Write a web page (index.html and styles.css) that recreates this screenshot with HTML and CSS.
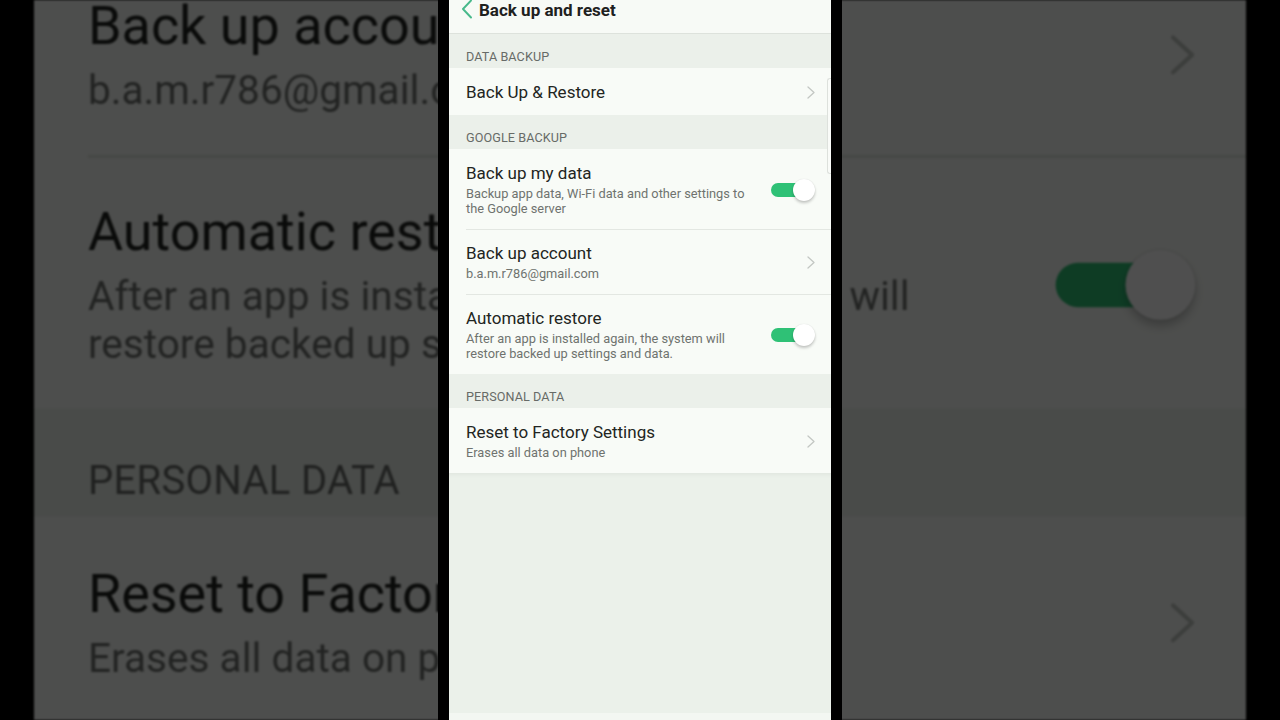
FILE: index.html
```html
<!DOCTYPE html>
<html lang="en">
<head>
<meta charset="utf-8">
<title>Back up and reset</title>
<link rel="stylesheet" href="styles.css">
</head>
<body>
<div class="stage">
  <div class="backdrop" aria-hidden="true">
    <div class="backdrop-view">
      <div class="screen">
        <header class="appbar">
          <svg class="back" viewBox="0 0 12 20"><polyline points="10,1.5 2,10 10,18.5"/></svg>
          <h1>Back up and reset</h1>
        </header>
        <div class="section-title">DATA BACKUP</div>
        <div class="group">
          <div class="row"><div class="row-inner">
            <div class="text"><div class="title">Back Up &amp; Restore</div></div>
            <svg class="chev" viewBox="0 0 8 13"><polyline points="1,1 7,6.5 1,12"/></svg>
          </div></div>
        </div>
        <div class="section-title">GOOGLE BACKUP</div>
        <div class="group">
          <div class="row"><div class="row-inner">
            <div class="text"><div class="title">Back up my data</div><div class="sub">Backup app data, Wi-Fi data and other settings to the Google server</div></div>
            <div class="toggle"><span class="track"></span><span class="knob"></span></div>
          </div></div>
          <div class="row"><div class="row-inner">
            <div class="text"><div class="title">Back up account</div><div class="sub">b.a.m.r786@gmail.com</div></div>
            <svg class="chev" viewBox="0 0 8 13"><polyline points="1,1 7,6.5 1,12"/></svg>
          </div></div>
          <div class="row"><div class="row-inner">
            <div class="text"><div class="title">Automatic restore</div><div class="sub">After an app is installed again, the system will restore backed up settings and data.</div></div>
            <div class="toggle"><span class="track"></span><span class="knob"></span></div>
          </div></div>
        </div>
        <div class="section-title">PERSONAL DATA</div>
        <div class="group">
          <div class="row"><div class="row-inner">
            <div class="text"><div class="title">Reset to Factory Settings</div><div class="sub">Erases all data on phone</div></div>
            <svg class="chev" viewBox="0 0 8 13"><polyline points="1,1 7,6.5 1,12"/></svg>
          </div></div>
        </div>
        <div class="fill"></div>
        <div class="navstrip"></div>
        <div class="scrollbar"></div>
      </div>
    </div>
    <div class="dim"></div>
  </div>

  <div class="phone">
    <div class="screen">
      <header class="appbar">
        <svg class="back" viewBox="0 0 12 20"><polyline points="10,1.5 2,10 10,18.5"/></svg>
        <h1>Back up and reset</h1>
      </header>
      <div class="section-title">DATA BACKUP</div>
      <div class="group">
        <div class="row"><div class="row-inner">
          <div class="text"><div class="title">Back Up &amp; Restore</div></div>
          <svg class="chev" viewBox="0 0 8 13"><polyline points="1,1 7,6.5 1,12"/></svg>
        </div></div>
      </div>
      <div class="section-title">GOOGLE BACKUP</div>
      <div class="group">
        <div class="row"><div class="row-inner">
          <div class="text"><div class="title">Back up my data</div><div class="sub">Backup app data, Wi-Fi data and other settings to the Google server</div></div>
          <div class="toggle"><span class="track"></span><span class="knob"></span></div>
        </div></div>
        <div class="row"><div class="row-inner">
          <div class="text"><div class="title">Back up account</div><div class="sub">b.a.m.r786@gmail.com</div></div>
          <svg class="chev" viewBox="0 0 8 13"><polyline points="1,1 7,6.5 1,12"/></svg>
        </div></div>
        <div class="row"><div class="row-inner">
          <div class="text"><div class="title">Automatic restore</div><div class="sub">After an app is installed again, the system will restore backed up settings and data.</div></div>
          <div class="toggle"><span class="track"></span><span class="knob"></span></div>
        </div></div>
      </div>
      <div class="section-title">PERSONAL DATA</div>
      <div class="group">
        <div class="row"><div class="row-inner">
          <div class="text"><div class="title">Reset to Factory Settings</div><div class="sub">Erases all data on phone</div></div>
          <svg class="chev" viewBox="0 0 8 13"><polyline points="1,1 7,6.5 1,12"/></svg>
        </div></div>
      </div>
      <div class="fill"></div>
      <div class="navstrip"></div>
      <div class="scrollbar"></div>
    </div>
  </div>
</div>
</body>
</html>
```

FILE: styles.css
```css
* { box-sizing: border-box; }

html, body {
  margin: 0;
  padding: 0;
  background: #000;
}

body {
  font-family: Roboto, "Noto Sans", "Liberation Sans", sans-serif;
}

.stage {
  position: relative;
  width: 1280px;
  height: 720px;
  background: #000;
  overflow: hidden;
  display: flex;
  justify-content: center;
}

/* Enlarged, dimmed copy of the screen filling the background */
.backdrop {
  position: absolute;
  left: 34px;
  top: 0;
  width: 1212px;
  height: 720px;
  overflow: hidden;
  filter: blur(0.9px);
}

.backdrop-view {
  width: 382px;
  height: 720px;
  transform-origin: 0 0;
  transform: scale(3.1728) translateY(-245.2px);
}

.dim {
  position: absolute;
  inset: 0;
  background: rgba(0, 0, 0, 0.69);
}

/* Phone in the middle */
.phone {
  position: relative;
  width: 404px;
  height: 720px;
  background: #000;
  padding: 0 11px;
}

.screen {
  position: relative;
  width: 382px;
  height: 720px;
  background: #ebf0ea;
  display: flex;
  flex-direction: column;
  overflow: hidden;
}

.appbar {
  flex: none;
  height: 34px;
  background: #f7faf6;
  border-bottom: 1px solid #dde2dc;
  display: flex;
  align-items: flex-start;
  padding-left: 12px;
}

.back {
  width: 12px;
  height: 20px;
  margin-top: -1px;
  fill: none;
  stroke: #48b98b;
  stroke-width: 1.9;
  stroke-linecap: round;
  stroke-linejoin: round;
}

.appbar h1 {
  margin: 1px 0 0 6px;
  font-size: 17px;
  line-height: 18px;
  font-weight: 700;
  color: #1e211e;
}

.section-title {
  flex: none;
  height: 34px;
  padding: 15px 17px 3px;
  font-size: 12.6px;
  line-height: 16px;
  color: #676b67;
  letter-spacing: 0.1px;
}

.group {
  flex: none;
  background: #f8fbf7;
}

.row {
  padding-left: 17px;
}

.row-inner {
  display: flex;
  align-items: center;
  padding: 14px 16px 13px 0;
}

.row + .row .row-inner {
  border-top: 1px solid #e3e7e2;
  padding-top: 13px;
}

.text {
  flex: 1;
  min-width: 0;
  margin-right: 16px;
}

.title {
  font-size: 17px;
  line-height: 20px;
  color: #222522;
}

.sub {
  margin-top: 3px;
  font-size: 12.8px;
  line-height: 15px;
  color: #6f736f;
}

.chev {
  flex: none;
  width: 8px;
  height: 13px;
  fill: none;
  stroke: #c3c7c3;
  stroke-width: 1.3;
  stroke-linecap: round;
  stroke-linejoin: round;
}

.toggle {
  flex: none;
  position: relative;
  width: 44px;
  height: 22px;
}

.track {
  position: absolute;
  left: 0;
  top: 4px;
  width: 34px;
  height: 14px;
  border-radius: 7px;
  background: #2fc176;
}

.knob {
  position: absolute;
  right: 0;
  top: 0;
  width: 22px;
  height: 22px;
  border-radius: 50%;
  background: #ffffff;
  box-shadow: 0 2px 3px rgba(0, 0, 0, 0.22), 0 0 1px rgba(0, 0, 0, 0.12);
}

.fill {
  flex: 1;
  background: #ebf1ea;
  box-shadow: inset 0 5px 5px -4px rgba(0, 0, 0, 0.06);
}

.navstrip {
  flex: none;
  height: 7px;
  background: #f3f7f2;
}

.scrollbar {
  position: absolute;
  right: 0;
  top: 78px;
  width: 4px;
  height: 96px;
  border: 1px solid #dde1dc;
  border-right: none;
  border-radius: 3px 0 0 3px;
  background: #f9fbf8;
}
```
